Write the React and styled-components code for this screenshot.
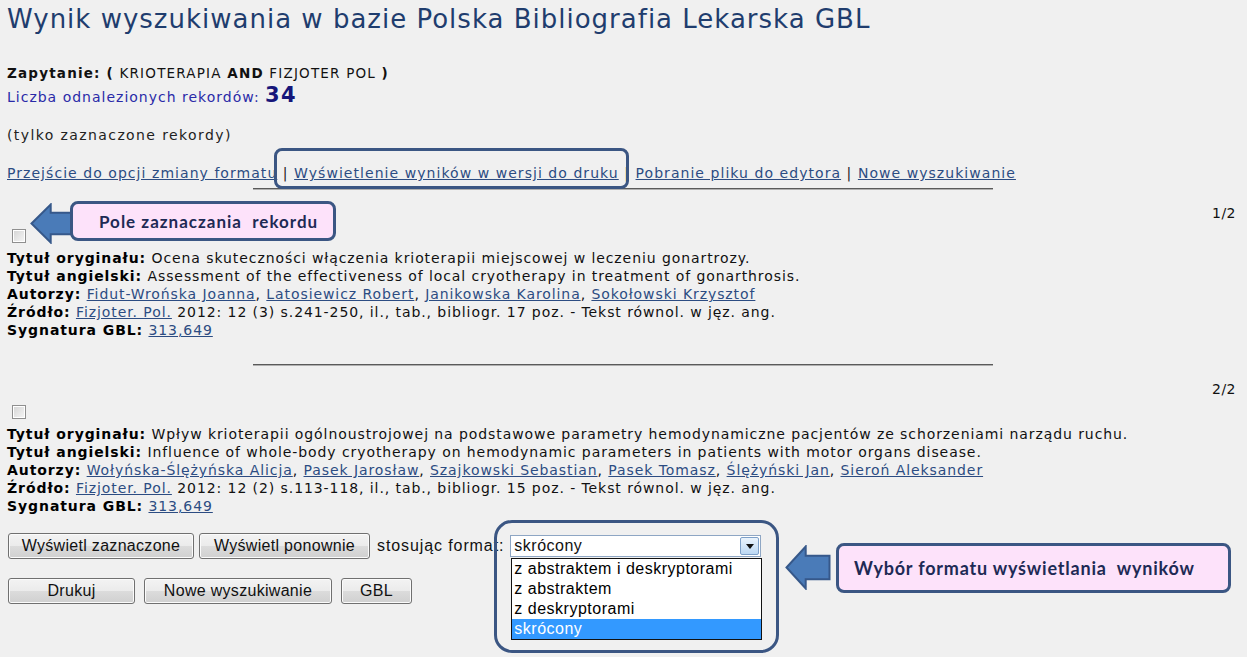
import React from 'react';
import styled, { createGlobalStyle } from 'styled-components';

const Global = createGlobalStyle`
  html, body { margin: 0; padding: 0; background: #f0f0f0; }
  body {
    width: 1247px; height: 657px; overflow: hidden;
    font-family: "DejaVu Sans", Verdana, sans-serif;
    color: #111;
  }
`;

const Page = styled.div`
  position: relative;
  box-sizing: border-box;
  height: 657px;
  padding: 0 11px 0 7px;
`;

const Title = styled.h1`
  margin: 0;
  font-weight: normal;
  font-size: 26px;
  letter-spacing: 1px;
  line-height: 38px;
  color: #1f3d6e;
  white-space: nowrap;
`;

const Query = styled.div`
  margin-top: 26px;
  font-size: 13.5px;
  letter-spacing: 1.2px;
  line-height: 18px;
  color: #111;
  white-space: nowrap;
`;

const Count = styled.div`
  margin-top: 2px;
  font-size: 14px;
  letter-spacing: 1px;
  line-height: 22px;
  color: #2a2aa8;
  white-space: nowrap;
`;

const CountNum = styled.b`
  font-size: 21px;
  letter-spacing: 1.2px;
  color: #16167a;
`;

const Note = styled.div`
  margin-top: 18px;
  font-size: 14px;
  letter-spacing: 1.4px;
  line-height: 18px;
  color: #222;
`;

const LinkBar = styled.div`
  margin-top: 20px;
  font-size: 14px;
  letter-spacing: 1.05px;
  line-height: 18px;
  white-space: nowrap;
`;

const Link = styled.a`
  color: #2c4c82;
  text-decoration: underline;
  cursor: pointer;
`;

const Sep = styled.span`
  color: #222;
`;

const Rule = styled.hr`
  width: 740px;
  margin: ${p => p.$top}px auto 0 246px;
  height: 0;
  border: 0;
  border-top: 1px solid #5a5a5a;
  border-bottom: 1px solid #b0b0b0;
`;

const Record = styled.section`
  margin-top: ${p => p.$top}px;
`;

const Counter = styled.div`
  text-align: right;
  font-size: 14px;
  letter-spacing: 0.5px;
  line-height: 18px;
  color: #111;
`;

const CheckRow = styled.div`
  box-sizing: border-box;
  height: 27px;
  padding: 7px 0 0 5px;
`;

const Box = styled.span`
  display: block;
  box-sizing: border-box;
  width: 14px;
  height: 14px;
  border: 1px solid #8f8f8f;
  background: linear-gradient(135deg, #d4d4d4, #f6f6f6);
  box-shadow: inset 0 0 0 1px #fff;
`;

const Fields = styled.div`
  font-size: 14px;
  line-height: 18px;
  letter-spacing: 0.92px;
  white-space: nowrap;
`;

const Label = styled.b`
  color: #000;
`;

const Controls = styled.div`
  margin-top: 18px;
  padding-left: 1px;
`;

const ButtonRow = styled.div`
  display: flex;
  align-items: center;
  gap: ${p => p.$gap}px;
  margin-top: ${p => p.$top || 0}px;
`;

const Button = styled.button`
  width: ${p => p.$w}px;
  height: 26px;
  padding: 0;
  font-family: "Liberation Sans", Arial, sans-serif;
  font-size: 16px;
  letter-spacing: 0.3px;
  color: #111;
  border: 1px solid #707070;
  border-radius: 3px;
  background: linear-gradient(#f3f3f3, #ebebeb 50%, #dcdcdc 50%, #d0d0d0);
  box-shadow: inset 0 0 0 1px #fbfbfb;
`;

const FormatLabel = styled.span`
  margin-left: 2px;
  font-family: "Liberation Sans", Arial, sans-serif;
  font-size: 16px;
  letter-spacing: 0.9px;
  color: #111;
  white-space: nowrap;
`;

const SelectWrap = styled.div`
  position: relative;
  margin-left: 1px;
`;

const SelectBox = styled.div`
  box-sizing: border-box;
  width: 251px;
  height: 22px;
  display: flex;
  align-items: center;
  justify-content: space-between;
  padding: 0 1px 0 3px;
  background: #fff;
  border: 1px solid #8ea6c4;
  font-family: "Liberation Sans", Arial, sans-serif;
  font-size: 16px;
  letter-spacing: 0.5px;
`;

const DropButton = styled.span`
  box-sizing: border-box;
  width: 19px;
  height: 18px;
  display: flex;
  align-items: center;
  justify-content: center;
  border: 1px solid #7ea0c8;
  border-radius: 2px;
  background: linear-gradient(#eaf3fc, #bcd8f3);
`;

const Tri = styled.span`
  width: 0;
  height: 0;
  border-left: 4px solid transparent;
  border-right: 4px solid transparent;
  border-top: 5px solid #111;
`;

const List = styled.ul`
  position: absolute;
  top: 23px;
  left: 1px;
  box-sizing: border-box;
  width: 251px;
  margin: 0;
  padding: 0;
  list-style: none;
  background: #fff;
  border: 1px solid #111;
  font-family: "Liberation Sans", Arial, sans-serif;
  font-size: 16px;
  z-index: 2;
`;

const Option = styled.li`
  height: 20px;
  line-height: 20px;
  padding-left: 2px;
  letter-spacing: 0.5px;
  white-space: nowrap;
  background: ${p => (p.$sel ? '#3399ff' : '#fff')};
  color: ${p => (p.$sel ? '#fff' : '#000')};
`;

const Frame = styled.div`
  position: absolute;
  left: ${p => p.$x}px;
  top: ${p => p.$y}px;
  width: ${p => p.$w}px;
  height: ${p => p.$h}px;
  box-sizing: border-box;
  border: 3px solid #3b5683;
  border-radius: ${p => p.$r}px;
  pointer-events: none;
  z-index: 3;
`;

const Callout = styled.div`
  position: absolute;
  left: ${p => p.$x}px;
  top: ${p => p.$y}px;
  width: ${p => p.$w}px;
  height: ${p => p.$h}px;
  box-sizing: border-box;
  display: flex;
  align-items: center;
  padding-left: ${p => p.$pad}px;
  border: 3px solid #3b5683;
  border-radius: 8px;
  background: #fde2fa;
  font-family: Lato, "Open Sans", sans-serif;
  font-weight: bold;
  font-size: ${p => p.$fs}px;
  letter-spacing: ${p => p.$ls}px;
  color: #1e2a55;
  white-space: pre;
  z-index: 3;
`;

const ArrowSvg = styled.svg`
  position: absolute;
  left: ${p => p.$x}px;
  top: ${p => p.$y}px;
  z-index: 3;
`;

function Arrow({ x, y, w, h }) {
  const mid = h / 2;
  const head = w * 0.45;
  const shaftTop = h * 0.24;
  const shaftBot = h * 0.76;
  const pts = [
    [1.5, mid],
    [head, 1.5],
    [head, shaftTop],
    [w - 1.5, shaftTop],
    [w - 1.5, shaftBot],
    [head, shaftBot],
    [head, h - 1.5],
  ].map(p => p.join(',')).join(' ');
  return (
    <ArrowSvg $x={x} $y={y} width={w} height={h} viewBox={`0 0 ${w} ${h}`}>
      <polygon points={pts} fill="#4a7bb8" stroke="#36588a" strokeWidth="2" strokeLinejoin="miter" />
    </ArrowSvg>
  );
}

const records = [
  {
    n: '1/2',
    orig: 'Ocena skuteczności włączenia krioterapii miejscowej w leczeniu gonartrozy.',
    en: 'Assessment of the effectiveness of local cryotherapy in treatment of gonarthrosis.',
    authors: ['Fidut-Wrońska Joanna', 'Latosiewicz Robert', 'Janikowska Karolina', 'Sokołowski Krzysztof'],
    src: ' 2012: 12 (3) s.241-250, il., tab., bibliogr. 17 poz. - Tekst równol. w jęz. ang.',
  },
  {
    n: '2/2',
    orig: 'Wpływ krioterapii ogólnoustrojowej na podstawowe parametry hemodynamiczne pacjentów ze schorzeniami narządu ruchu.',
    en: 'Influence of whole-body cryotherapy on hemodynamic parameters in patients with motor organs disease.',
    authors: ['Wołyńska-Ślężyńska Alicja', 'Pasek Jarosław', 'Szajkowski Sebastian', 'Pasek Tomasz', 'Ślężyński Jan', 'Sieroń Aleksander'],
    src: ' 2012: 12 (2) s.113-118, il., tab., bibliogr. 15 poz. - Tekst równol. w jęz. ang.',
  },
];

function RecordBlock({ r, top }) {
  return (
    <Record $top={top}>
      <Counter>{r.n}</Counter>
      <CheckRow><Box /></CheckRow>
      <Fields>
        <div><Label>Tytuł oryginału:</Label> {r.orig}</div>
        <div><Label>Tytuł angielski:</Label> {r.en}</div>
        <div>
          <Label>Autorzy:</Label>{' '}
          {r.authors.map((a, i) => (
            <React.Fragment key={a}>
              {i > 0 && ', '}
              <Link>{a}</Link>
            </React.Fragment>
          ))}
        </div>
        <div><Label>Źródło:</Label> <Link>Fizjoter. Pol.</Link>{r.src}</div>
        <div><Label>Sygnatura GBL:</Label> <Link>313,649</Link></div>
      </Fields>
    </Record>
  );
}

export default function App() {
  return (
    <>
      <Global />
      <Page>
        <Title>Wynik wyszukiwania w bazie Polska Bibliografia Lekarska GBL</Title>
        <Query>
          <b>Zapytanie: (</b> KRIOTERAPIA <b>AND</b> FIZJOTER POL <b>)</b>
        </Query>
        <Count>
          Liczba odnalezionych rekordów: <CountNum>34</CountNum>
        </Count>
        <Note>(tylko zaznaczone rekordy)</Note>
        <LinkBar>
          <Link>Przejście do opcji zmiany formatu</Link>
          <Sep> | </Sep>
          <Link>Wyświetlenie wyników w wersji do druku</Link>
          <Sep> | </Sep>
          <Link>Pobranie pliku do edytora</Link>
          <Sep> | </Sep>
          <Link>Nowe wyszukiwanie</Link>
        </LinkBar>
        <Rule $top={6} />
        <RecordBlock r={records[0]} top={14} />
        <Rule $top={25} />
        <RecordBlock r={records[1]} top={14} />
        <Controls>
          <ButtonRow $gap={5}>
            <Button $w={186}>Wyświetl zaznaczone</Button>
            <Button $w={171}>Wyświetl ponownie</Button>
            <FormatLabel>stosując format:</FormatLabel>
            <SelectWrap>
              <SelectBox>
                <span>skrócony</span>
                <DropButton><Tri /></DropButton>
              </SelectBox>
              <List>
                <Option>z abstraktem i deskryptorami</Option>
                <Option>z abstraktem</Option>
                <Option>z deskryptorami</Option>
                <Option $sel>skrócony</Option>
              </List>
            </SelectWrap>
          </ButtonRow>
          <ButtonRow $gap={9} $top={19}>
            <Button $w={127}>Drukuj</Button>
            <Button $w={188}>Nowe wyszukiwanie</Button>
            <Button $w={71}>GBL</Button>
          </ButtonRow>
        </Controls>

        <Frame $x={274} $y={148} $w={355} $h={41} $r={8} />
        <Arrow x={30} y={203} w={46} h={41} />
        <Callout $x={70} $y={201} $w={266} $h={40} $pad={26} $fs={17} $ls={1}>Pole zaznaczania  rekordu</Callout>
        <Frame $x={494} $y={520} $w={285} $h={133} $r={18} />
        <Arrow x={785} y={545} w={46} h={45} />
        <Callout $x={836} $y={543} $w={395} $h={50} $pad={15} $fs={18} $ls={0.8}>Wybór formatu wyświetlania  wyników</Callout>
      </Page>
    </>
  );
}
